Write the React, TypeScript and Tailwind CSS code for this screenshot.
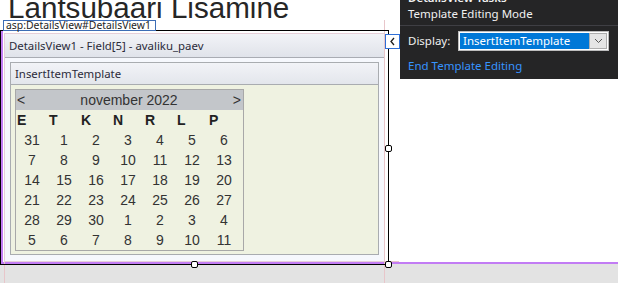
import React from "react";

const days = ["E", "T", "K", "N", "R", "L", "P"];
const weeks = [
  [31, 1, 2, 3, 4, 5, 6],
  [7, 8, 9, 10, 11, 12, 13],
  [14, 15, 16, 17, 18, 19, 20],
  [21, 22, 23, 24, 25, 26, 27],
  [28, 29, 30, 1, 2, 3, 4],
  [5, 6, 7, 8, 9, 10, 11],
];

function Handle({ cls }: { cls: string }) {
  return (
    <div
      className={`absolute w-[7px] h-[7px] bg-white border border-black rounded-[2px] ${cls}`}
    />
  );
}

export default function App() {
  return (
    <div
      className="relative w-[618px] h-[283px] overflow-hidden bg-[#e3e3e3] flex flex-col"
      style={{ fontFamily: "'Noto Sans', 'Liberation Sans', sans-serif" }}
    >
      {/* design surface */}
      <div className="h-[264px] bg-white border-b-2 border-[#c27cf4] flex flex-col shrink-0">
        <div className="h-[33px] pl-[8px] overflow-visible">
          <div
            className="-mt-[7px] leading-[30px] text-[29.6px] text-[#262626] whitespace-nowrap"
            style={{ fontFamily: "'Liberation Sans', Arial, sans-serif" }}
          >
            Lantsubaari Lisamine
          </div>
        </div>

        {/* DetailsView panel */}
        <div className="ml-[4px] w-[381px] h-[229px] border border-[#e6cfd8] bg-[#f6f8fd] flex flex-col">
          <div className="h-[24px] border-b border-[#a9acb3] bg-gradient-to-b from-[#f2f3f7] to-[#e0e3ea] pl-[4px] flex items-center text-[11.4px] text-[#2b2b3a] whitespace-nowrap">
            DetailsView1 - Field[5] - avaliku_paev
          </div>
          <div className="ml-[5px] mt-[4px] w-[369px] h-[193px] border border-[#a9acb0] flex flex-col">
            <div className="h-[22px] border-b border-[#a9acb0] bg-gradient-to-b from-[#f2f3f7] to-[#e3e6ec] pl-[4px] flex items-center text-[11.4px] text-[#2b2b3a]">
              InsertItemTemplate
            </div>
            <div className="flex-1 bg-[#eff2e1] pl-[4px] pt-[4px]">
              {/* calendar */}
              <div
                className="w-[229px] h-[162px] border border-[#a8a8a8] text-[14px] text-[#333] flex flex-col"
                style={{ fontFamily: "'Liberation Sans', Arial, sans-serif" }}
              >
                <div className="h-[20px] bg-[#c3c6ca] flex items-center justify-between pl-[1px] pr-[2px]">
                  <span>&lt;</span>
                  <span>november 2022</span>
                  <span>&gt;</span>
                </div>
                <div className="h-[20px] flex items-center">
                  {days.map((d) => (
                    <div key={d} className="w-[32px] font-bold text-[#222] pl-[1px]">
                      {d}
                    </div>
                  ))}
                </div>
                {weeks.map((w, i) => (
                  <div key={i} className="h-[20px] flex items-center">
                    {w.map((n, j) => (
                      <div key={j} className="w-[32px] text-center">
                        {n}
                      </div>
                    ))}
                  </div>
                ))}
              </div>
            </div>
          </div>
        </div>
      </div>

      {/* guides */}
      <div className="absolute left-[384px] top-[20px] w-px h-[263px] bg-[#e8c6ca]" />
      <div className="absolute left-[4px] top-[262px] w-px h-[21px] bg-[#e8c6ca]" />
      <div className="absolute left-[384px] top-[261px] w-[15px] h-px bg-[#e8c6ca]" />
      <div className="absolute left-[1px] top-[31px] w-[2px] h-[232px] bg-[#c27cf4]" />

      {/* selection rectangle */}
      <div className="absolute left-0 top-[30px] w-[389px] h-[235px] border border-black pointer-events-none" />
      <Handle cls="left-[385px] top-[145px]" />
      <Handle cls="left-[385px] top-[261px]" />
      <Handle cls="left-[191px] top-[261px]" />

      {/* tag label */}
      <div className="absolute left-[3px] top-[20px] w-[153px] h-[11px] bg-white border border-[#3d6db5] flex items-center pl-[2px] text-[10.4px] leading-none text-[#1e1e1e] whitespace-nowrap">
        asp:DetailsView#DetailsView1
      </div>

      {/* smart tag arrow */}
      <div className="absolute left-[385px] top-[34px] w-[15px] h-[15px] bg-white border border-[#2f6fd6] flex items-center justify-center">
        <svg width="7" height="9" viewBox="0 0 7 9">
          <polyline points="5,1 2,4.5 5,8" fill="none" stroke="#1e1e1e" strokeWidth="1.3" />
        </svg>
      </div>

      {/* tasks popup */}
      <div className="absolute left-[400px] top-0 w-[218px] h-[79px] bg-[#252526] flex flex-col text-[11.5px] text-[#f1f1f1]">
        <div className="h-[25px] pl-[8px]">
          <div className="-mt-[10px] leading-[16px] font-semibold whitespace-nowrap">DetailsView Tasks</div>
          <div className="leading-[16px] whitespace-nowrap">Template Editing Mode</div>
        </div>
        <div className="h-px bg-[#3f3f44]" />
        <div className="mt-[5px] h-[20px] flex items-center pl-[8px]">
          <span className="w-[50px]">Display:</span>
          <div className="w-[151px] h-[20px] border border-[#bdbdbd] bg-white flex p-px">
            <div className="flex-1 bg-[#0078d7] text-white flex items-center pl-[3px] whitespace-nowrap">
              InsertItemTemplate
            </div>
            <div className="w-[18px] bg-[#e5e5e5] border border-[#adadad] flex items-center justify-center">
              <svg width="9" height="6" viewBox="0 0 9 6">
                <polyline points="1,1 4.5,4.5 8,1" fill="none" stroke="#555" strokeWidth="1" />
              </svg>
            </div>
          </div>
        </div>
        <div className="mt-[7px] pl-[8px] leading-[16px] text-[#3794ff] whitespace-nowrap">End Template Editing</div>
      </div>
    </div>
  );
}
